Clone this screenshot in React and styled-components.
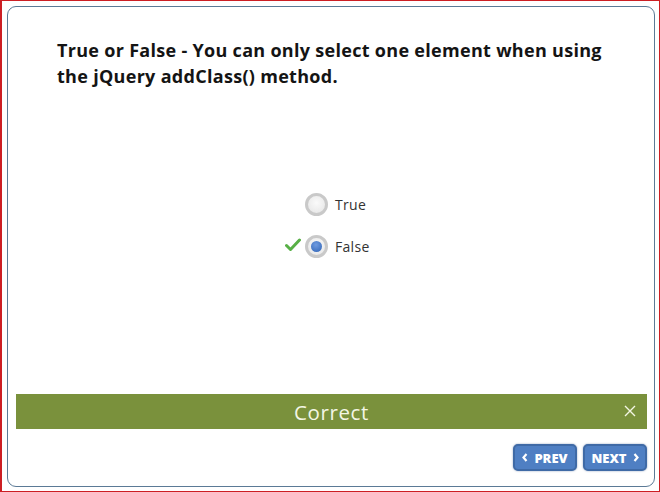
import styled, { createGlobalStyle } from 'styled-components'

const Global = createGlobalStyle`
  html, body { margin: 0; padding: 0; background: #fff; }
  body { font-family: "Open Sans", "Liberation Sans", sans-serif; }
`

const Frame = styled.div`
  box-sizing: border-box;
  width: 660px;
  height: 492px;
  border: 1px solid #cc1f24;
  border-left-width: 2px;
  padding: 5px;
  background: #fff;
`

const Panel = styled.div`
  box-sizing: border-box;
  width: 648px;
  height: 481px;
  border: 1px solid #5b7a96;
  border-radius: 9px;
  display: flex;
  flex-direction: column;
  padding: 30px 7px 15px 8px;
`

const Question = styled.h1`
  margin: 0 0 0 41px;
  font-size: 18px;
  line-height: 26px;
  font-weight: 700;
  letter-spacing: 0.3px;
  color: #141414;
  width: 565px;
`

const Options = styled.div`
  margin-top: 99px;
  display: flex;
  flex-direction: column;
  gap: 10px;
  padding-left: 289px;
`

const Option = styled.label`
  position: relative;
  display: flex;
  align-items: center;
  gap: 7px;
  height: 32px;
  font-size: 14px;
  color: #333;
  letter-spacing: 0.3px;
`

const Radio = styled.span`
  box-sizing: border-box;
  width: 23px;
  height: 23px;
  border-radius: 50%;
  border: 3px solid #c9c9c9;
  background: radial-gradient(circle at 50% 40%, #fafafa, #e4e4e4);
  display: flex;
  align-items: center;
  justify-content: center;
  &::after {
    content: '';
    width: 11px;
    height: 11px;
    border-radius: 50%;
    display: ${p => (p.$checked ? 'block' : 'none')};
    background: radial-gradient(circle at 45% 35%, #6f9be0, #2f63b5);
  }
`

const Tick = styled.svg`
  position: absolute;
  left: -20px;
  top: 8px;
`

const Feedback = styled.div`
  margin-top: auto;
  height: 35px;
  background: #7a913c;
  display: flex;
  align-items: center;
  justify-content: center;
  position: relative;
  color: #f3f6e4;
  font-size: 20.5px;
  letter-spacing: 0.6px;
`

const Close = styled.svg`
  position: absolute;
  right: 11px;
  top: 11px;
`

const Nav = styled.div`
  margin-top: 15px;
  display: flex;
  justify-content: flex-end;
  gap: 6px;
`

const NavButton = styled.button`
  box-sizing: border-box;
  height: 27px;
  width: 64px;
  border: 2px solid #3f6aa6;
  border-radius: 5px;
  background: #4f7fc3;
  box-shadow: 0 0 2px rgba(60, 90, 140, 0.6);
  color: #fff;
  font-family: "Open Sans", "Liberation Sans", sans-serif;
  font-weight: 800;
  font-size: 13px;
  display: flex;
  align-items: center;
  justify-content: center;
  gap: 6px;
  padding: 0;
`

const Chevron = ({ dir }) => (
  <svg width="6" height="9" viewBox="0 0 6 9">
    <path
      d={dir === 'left' ? 'M4.5 1 L1.5 4.5 L4.5 8' : 'M1.5 1 L4.5 4.5 L1.5 8'}
      stroke="#fff"
      strokeWidth="2.2"
      fill="none"
    />
  </svg>
)

const App = () => {
  return (
    <Frame>
      <Global />
      <Panel>
        <Question>
          True or False - You can only select one element when using the jQuery addClass() method.
        </Question>
        <Options>
          <Option>
            <Radio />
            True
          </Option>
          <Option>
            <Tick width="16" height="14" viewBox="0 0 16 14">
              <path d="M1.5 7.5 L5.5 11.5 L14.5 2" stroke="#58b046" strokeWidth="3" fill="none" strokeLinecap="round" strokeLinejoin="round" />
            </Tick>
            <Radio $checked />
            False
          </Option>
        </Options>
        <Feedback>
          Correct
          <Close width="12" height="12" viewBox="0 0 12 12">
            <path d="M1 1 L11 11 M11 1 L1 11" stroke="#f3f6e4" strokeWidth="1.4" />
          </Close>
        </Feedback>
        <Nav>
          <NavButton>
            <Chevron dir="left" />
            PREV
          </NavButton>
          <NavButton>
            NEXT
            <Chevron dir="right" />
          </NavButton>
        </Nav>
      </Panel>
    </Frame>
  )
}

export default App
